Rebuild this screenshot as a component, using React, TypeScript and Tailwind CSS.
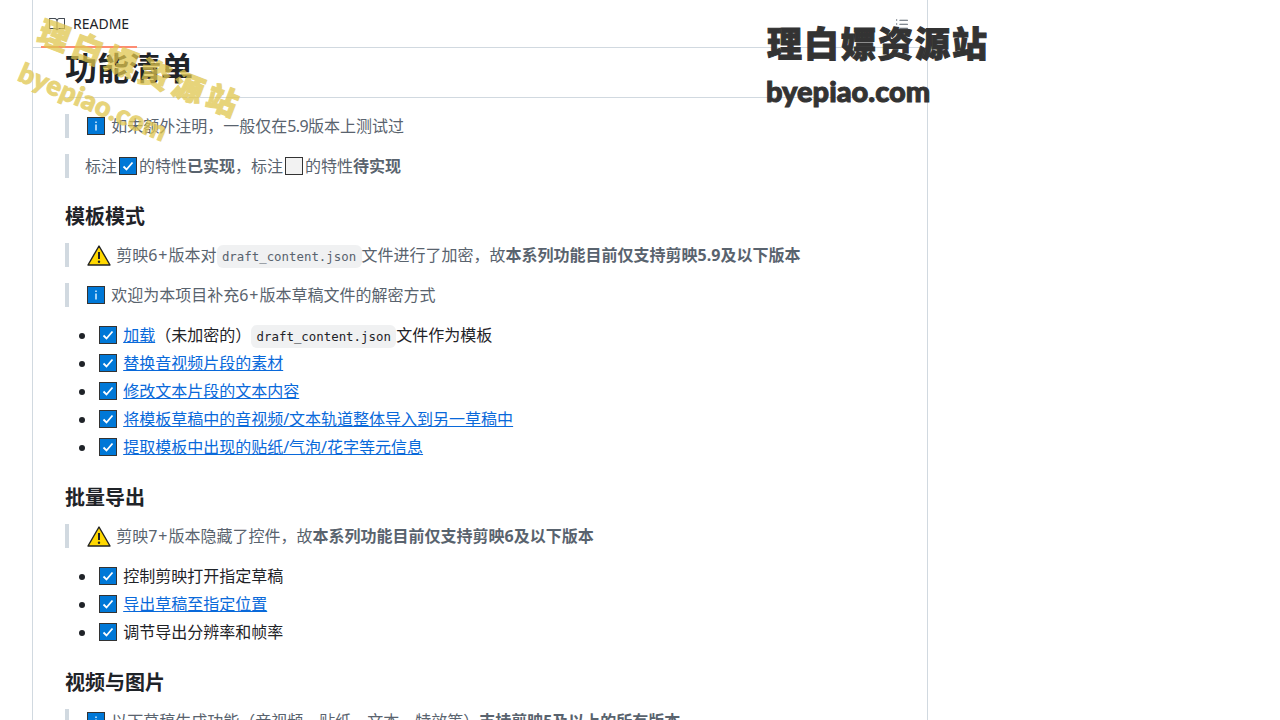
import { GoBook, GoListUnordered } from "react-icons/go";
import type { ReactNode } from "react";

function Info() {
  return (
    <span className="inline-block h-4 w-[22px] align-[-2px]">
      <svg width="18" height="18" viewBox="0 0 18 18" className="mx-[2px] -mt-px block">
        <rect x="0.5" y="0.5" width="17" height="17" fill="#0078d7" stroke="#333" />
        <rect x="8.25" y="4.5" width="1.5" height="1.5" fill="#dbeeff" />
        <rect x="8.25" y="7.5" width="1.5" height="6" fill="#dbeeff" />
      </svg>
    </span>
  );
}

function Check({ on = true }: { on?: boolean }) {
  return (
    <span className="inline-block h-4 w-[22px] align-[-2px]">
      <svg width="18" height="18" viewBox="0 0 18 18" fill="none" className="mx-[2px] -mt-px block">
        <rect x="0.5" y="0.5" width="17" height="17" fill={on ? "#0078d7" : "#f2f2f2"} stroke="#333" />
        {on && <path d="M4.5 9.5 L7.5 12.5 L13.5 5.5" stroke="#fff" strokeWidth="1.8" />}
      </svg>
    </span>
  );
}

function Warn() {
  return (
    <span className="inline-block h-4 w-[27px] align-[-2px]">
      <svg width="24" height="21" viewBox="0 0 24 21" className="ml-[2px] -mt-[2px] block">
        <path d="M12 1 L23 20 L1 20 Z" fill="#ffd800" stroke="#222" strokeWidth="1.4" strokeLinejoin="round" />
        <path d="M12 7 V14" stroke="#222" strokeWidth="2" />
        <circle cx="12" cy="16.8" r="1.2" fill="#222" />
      </svg>
    </span>
  );
}

function Code({ children }: { children: ReactNode }) {
  return (
    <code className="rounded-md bg-[#818b981f] px-[5.4px] py-[4px] font-['DejaVu_Sans_Mono',monospace] text-[12.4px] leading-none">{children}</code>
  );
}

function Quote({ children }: { children: ReactNode }) {
  return <blockquote className="mb-4 border-l-4 border-[#d1d9e0] pl-4 text-[#59636e]">{children}</blockquote>;
}

function H3({ children }: { children: ReactNode }) {
  return <h3 className="mb-[14px] mt-[26px] text-[20px] font-semibold leading-[25px]">{children}</h3>;
}

function A({ children }: { children: ReactNode }) {
  return <a className="text-[#0969da] underline">{children}</a>;
}

function Li({ children }: { children: ReactNode }) {
  return <li className="mt-1 first:mt-0"><Check />{" "}{children}</li>;
}

export default function App() {
  return (
    <div className="relative h-[720px] w-[1280px] overflow-hidden bg-white font-['Noto_Sans','Noto_Sans_CJK_SC',sans-serif] text-[16px] leading-6 text-[#1f2328]">
      <div className="ml-8 h-[720px] w-[896px] overflow-hidden border-x border-[#d1d9e0]">
        <div className="relative flex h-[48px] items-center justify-between border-b border-[#d1d9e0] pl-4 pr-[17px]">
          <div className="flex items-center gap-2 text-[14px]">
            <GoBook size={16} className="text-[#424a53]" />
            <span>README</span>
          </div>
          <GoListUnordered size={16} className="text-[#59636e]" />
          <span className="absolute bottom-[-1px] left-2 h-[2px] w-[96px] bg-[#fd8c73]" />
        </div>
        <div className="px-8">
          <h1 className="mb-4 border-b border-[#d1d9e0] pb-[9px] text-[32px] font-semibold leading-10">功能清单</h1>
          <Quote><Info />{" "}如未额外注明，一般仅在<span className="tracking-[-0.6px]">5.9</span>版本上测试过</Quote>
          <Quote>标注<Check />的特性<strong>已实现</strong>，标注<Check on={false} />的特性<strong>待实现</strong></Quote>
          <H3>模板模式</H3>
          <Quote><Warn />{" "}剪映6<span className="px-px">+</span>版本对<Code>draft_content.json</Code>文件进行了加密，故<strong>本系列功能目前仅支持剪映5.9及以下版本</strong></Quote>
          <Quote><Info />{" "}欢迎为本项目补充6<span className="px-px">+</span>版本草稿文件的解密方式</Quote>
          <ul className="mb-4 list-disc pl-8">
            <Li><A>加载</A>（未加密的）<Code>draft_content.json</Code>文件作为模板</Li>
            <Li><A>替换音视频片段的素材</A></Li>
            <Li><A>修改文本片段的文本内容</A></Li>
            <Li><A>将模板草稿中的音视频/文本轨道整体导入到另一草稿中</A></Li>
            <Li><A>提取模板中出现的贴纸/气泡/花字等元信息</A></Li>
          </ul>
          <H3>批量导出</H3>
          <Quote><Warn />{" "}剪映7<span className="px-px">+</span>版本隐藏了控件，故<strong>本系列功能目前仅支持剪映6及以下版本</strong></Quote>
          <ul className="mb-4 list-disc pl-8">
            <Li>控制剪映打开指定草稿</Li>
            <Li><A>导出草稿至指定位置</A></Li>
            <Li>调节导出分辨率和帧率</Li>
          </ul>
          <H3>视频与图片</H3>
          <Quote><Info />{" "}以下草稿生成功能（音视频、贴纸、文本、特效等）<strong>支持剪映5及以上的所有版本</strong></Quote>
        </div>
      </div>

      {/* watermark, top left */}
      <div className="pointer-events-none absolute left-[46px] top-[14px] origin-top-left rotate-[21deg] whitespace-nowrap font-['Noto_Sans_CJK_SC',sans-serif] text-[31px] font-black leading-none tracking-[5px] text-[#e0c64e] opacity-75 [-webkit-text-stroke:1px_#e0c64e]">理白嫖资源站</div>
      <div className="pointer-events-none absolute left-[26px] top-[58px] origin-top-left rotate-[23deg] whitespace-nowrap font-['Lato',sans-serif] text-[27px] font-black leading-none tracking-[0.5px] text-[#e0c64e] opacity-75 [-webkit-text-stroke:1px_#e0c64e]">byepiao.com</div>

      {/* watermark, top right */}
      <div className="pointer-events-none absolute left-[767px] top-[21px] whitespace-nowrap font-['Noto_Sans_CJK_SC',sans-serif] text-[35px] font-black leading-[42px] tracking-[2px] text-[#333] [-webkit-text-stroke:1px_#333]">理白嫖资源站</div>
      <div className="pointer-events-none absolute left-[766px] top-[73px] whitespace-nowrap font-['Lato',sans-serif] text-[29px] font-black leading-9 text-[#333] [-webkit-text-stroke:1px_#333]">byepiao.com</div>
    </div>
  );
}
